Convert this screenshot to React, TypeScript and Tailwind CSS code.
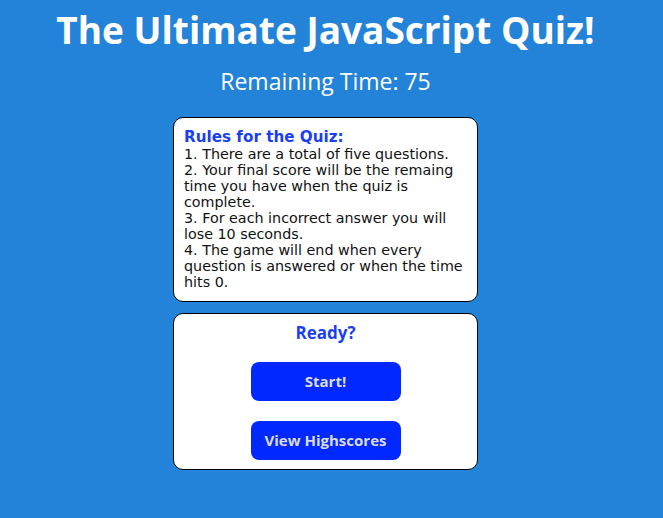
export default function App() {
  return (
    <div
      className="min-h-[518px] bg-[#2383d8] pr-[12px] pt-[8px] text-center"
      style={{ fontFamily: '"Open Sans", "Noto Sans", sans-serif' }}
    >
      <h1 className="text-[37px] font-bold leading-[44px] text-white">
        The Ultimate JavaScript Quiz!
      </h1>
      <p className="mt-[14px] text-[23px] leading-[30px] text-white">
        Remaining Time: 75
      </p>

      <div className="mx-auto mt-[21px] flex w-[305px] flex-col gap-[11px]">
        {/* Rules */}
        <div
          className="rounded-[10px] border border-black bg-white px-[10px] pt-[10px] pb-[11px] text-left"
          style={{ fontFamily: '"DejaVu Sans", sans-serif' }}
        >
          <p className="text-[15.2px] font-bold leading-[18px] text-[#1a3ff0]">
            Rules for the Quiz:
          </p>
          <p className="text-[14.3px] leading-[16px] text-[#111]">
            1. There are a total of five questions.
            <br />
            2. Your final score will be the remaing time you have when the quiz is complete.
            <br />
            3. For each incorrect answer you will lose 10 seconds.
            <br />
            4. The game will end when every question is answered or when the time hits 0.
          </p>
        </div>

        {/* Start */}
        <div className="flex flex-col items-center rounded-[10px] border border-black bg-white pt-[8px] pb-[9px]">
          <p className="text-[17px] font-bold leading-[22px] text-[#1a3ff0]">Ready?</p>
          <button className="mt-[18px] h-[39px] w-[150px] rounded-[8px] bg-[#0028ff] text-[15px] font-bold text-[#dcdcdc]">
            Start!
          </button>
          <button className="mt-[20px] h-[39px] w-[150px] rounded-[8px] bg-[#0028ff] text-[15px] font-bold text-[#dcdcdc]">
            View Highscores
          </button>
        </div>
      </div>
    </div>
  );
}
